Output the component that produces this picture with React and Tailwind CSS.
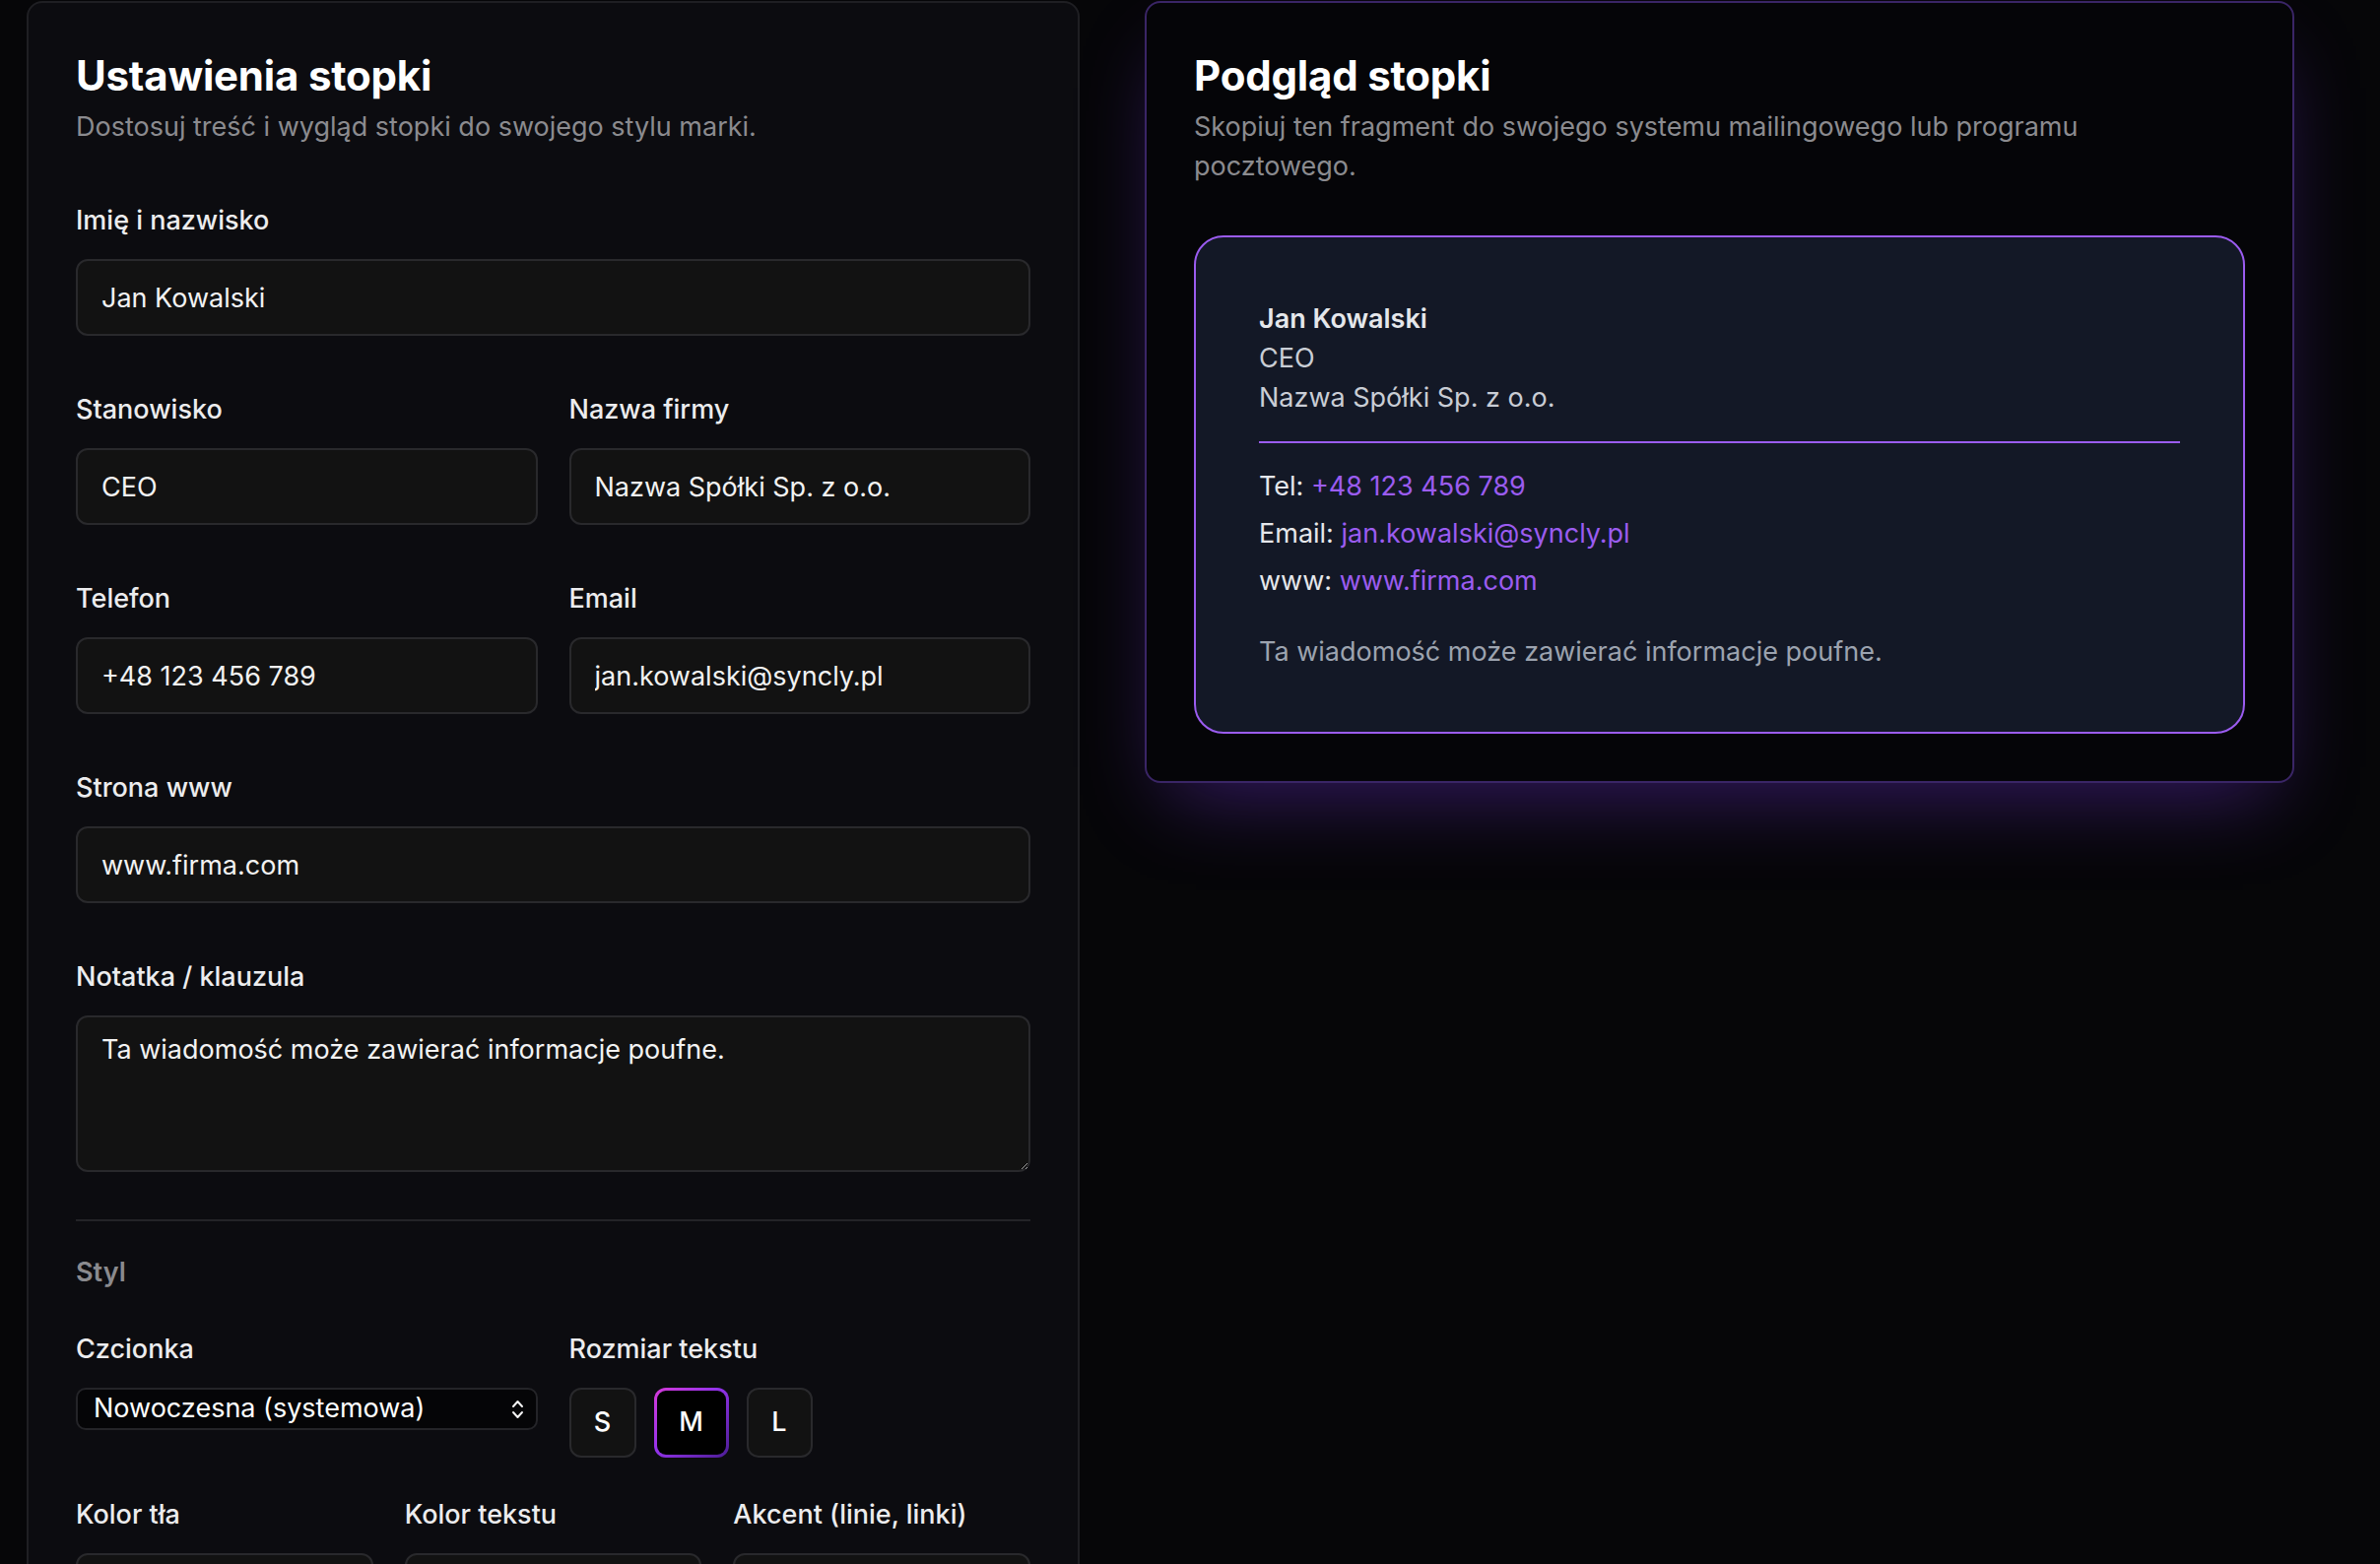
import React, { useState } from "react";

// Shared look for the text fields on the settings panel
const fieldClass =
  "block w-full h-[78px] rounded-[12px] border-2 border-[#29292c] bg-[#121212] px-[24px] text-[27px] text-[#f2f2f2] outline-none";

const Label = ({ children }) => (
  <label className="mb-[19px] block text-[27px] leading-[40px] font-medium text-[#ececee]">
    {children}
  </label>
);

const Field = ({ label, value }) => (
  <div>
    <Label>{label}</Label>
    <input className={fieldClass} defaultValue={value} />
  </div>
);

const ChevronsUpDown = () => (
  <svg width="15" height="22" viewBox="0 0 15 22" fill="none" stroke="#f2f2f2" strokeWidth="2" strokeLinecap="round" strokeLinejoin="round">
    <path d="M3 8 L7.5 3 L12 8" />
    <path d="M3 14 L7.5 19 L12 14" />
  </svg>
);

const SizeButton = ({ letter, active, width }) =>
  active ? (
    <div className={`rounded-[12px] bg-[linear-gradient(135deg,#d63ad8_0%,#9333ea_45%,#4c1d95_100%)] p-[3px] ${width}`}>
      <div className="flex h-[65px] items-center justify-center rounded-[9px] bg-black text-[27px] font-medium text-white">
        {letter}
      </div>
    </div>
  ) : (
    <div className={`flex h-[71px] items-center justify-center rounded-[12px] border-2 border-[#29292c] bg-[#121212] text-[27px] font-medium text-white ${width}`}>
      {letter}
    </div>
  );

const colorFields = [
  { label: "Kolor tła", value: "#111827" },
  { label: "Kolor tekstu", value: "#e5e7eb" },
  { label: "Akcent (linie, linki)", value: "#9b5cf0" },
];

export default function App() {
  const [size] = useState("M");

  return (
    <div className="min-h-screen bg-[#060608] font-['Inter',sans-serif] text-white">
      <div className="grid grid-cols-[1069px_1167px] items-start gap-x-[66px] pl-[27px] pt-[1px]">
        {/* Settings panel */}
        <section className="rounded-[16px] border-2 border-[#1f1f23] bg-[#0c0c10] px-[48px] pt-[48px] pb-[60px]">
          <h1 className="text-[42px] leading-[52px] font-bold tracking-[-0.005em] text-white">
            Ustawienia stopki
          </h1>
          <p className="mt-[6px] text-[27px] leading-[40px] text-[#8b8b8f]">
            Dostosuj treść i wygląd stopki do swojego stylu marki.
          </p>

          <div className="mt-[55px] flex flex-col gap-[55px]">
            <Field label="Imię i nazwisko" value="Jan Kowalski" />
            <div className="grid grid-cols-2 gap-x-[32px]">
              <Field label="Stanowisko" value="CEO" />
              <Field label="Nazwa firmy" value="Nazwa Spółki Sp. z o.o." />
            </div>
            <div className="grid grid-cols-2 gap-x-[32px]">
              <Field label="Telefon" value="+48 123 456 789" />
              <Field label="Email" value="jan.kowalski@syncly.pl" />
            </div>
            <Field label="Strona www" value="www.firma.com" />
            <div>
              <Label>Notatka / klauzula</Label>
              <textarea
                className="block h-[159px] w-full rounded-[12px] border-2 border-[#29292c] bg-[#121212] px-[24px] pt-[13px] text-[27px] leading-[40px] text-[#f2f2f2] outline-none"
                defaultValue="Ta wiadomość może zawierać informacje poufne."
              />
            </div>
          </div>

          <div className="mt-[48px] h-[2px] bg-[#242428]" />

          <h2 className="mt-[32px] text-[27px] leading-[40px] font-semibold text-[#8a8a8e]">Styl</h2>

          <div className="mt-[38px] grid grid-cols-2 gap-x-[32px]">
            <div>
              <Label>Czcionka</Label>
              <div className="flex h-[43px] items-center justify-between rounded-[10px] border-2 border-[#242428] bg-[#050507] pl-[16px] pr-[11px] text-[27px] text-white">
                <span>Nowoczesna (systemowa)</span>
                <ChevronsUpDown />
              </div>
            </div>
            <div>
              <Label>Rozmiar tekstu</Label>
              <div className="flex gap-[18px]">
                <SizeButton letter="S" active={size === "S"} width="w-[68px]" />
                <SizeButton letter="M" active={size === "M"} width="w-[76px]" />
                <SizeButton letter="L" active={size === "L"} width="w-[67px]" />
              </div>
            </div>
          </div>

          <div className="mt-[38px] grid grid-cols-3 gap-x-[32px]">
            {colorFields.map((c) => (
              <Field key={c.label} label={c.label} value={c.value} />
            ))}
          </div>
        </section>

        {/* Preview panel */}
        <section className="rounded-[16px] border-2 border-[#3a2566] bg-[#050508] p-[48px] shadow-[0_36px_80px_-24px_rgba(124,58,237,0.4)]">
          <h1 className="text-[42px] leading-[52px] font-bold tracking-[-0.005em] text-white">
            Podgląd stopki
          </h1>
          <p className="mt-[6px] text-[27px] leading-[40px] text-[#8b8b8f]">
            Skopiuj ten fragment do swojego systemu mailingowego lub programu pocztowego.
          </p>

          <div className="mt-[50px] rounded-[30px] border-2 border-[#9b5cf0] bg-[#131826] px-[64px] pt-[63px] pb-[61px] text-[27px] leading-[40px]">
            <div className="font-semibold text-[#e5e7eb]">Jan Kowalski</div>
            <div className="text-[#c9cdd5]">CEO</div>
            <div className="text-[#c9cdd5]">Nazwa Spółki Sp. z o.o.</div>

            <div className="mt-[24px] h-[2px] bg-[#9b5cf0]" />

            <div className="mt-[24px] flex flex-col gap-[8px] text-[#e5e7eb]">
              <div>
                Tel: <span className="text-[#9b5cf0]">+48 123 456 789</span>
              </div>
              <div>
                Email: <span className="text-[#9b5cf0]">jan.kowalski@syncly.pl</span>
              </div>
              <div>
                www: <span className="text-[#9b5cf0]">www.firma.com</span>
              </div>
            </div>

            <p className="mt-[32px] text-[#9ca3af]">Ta wiadomość może zawierać informacje poufne.</p>
          </div>
        </section>
      </div>
    </div>
  );
}
